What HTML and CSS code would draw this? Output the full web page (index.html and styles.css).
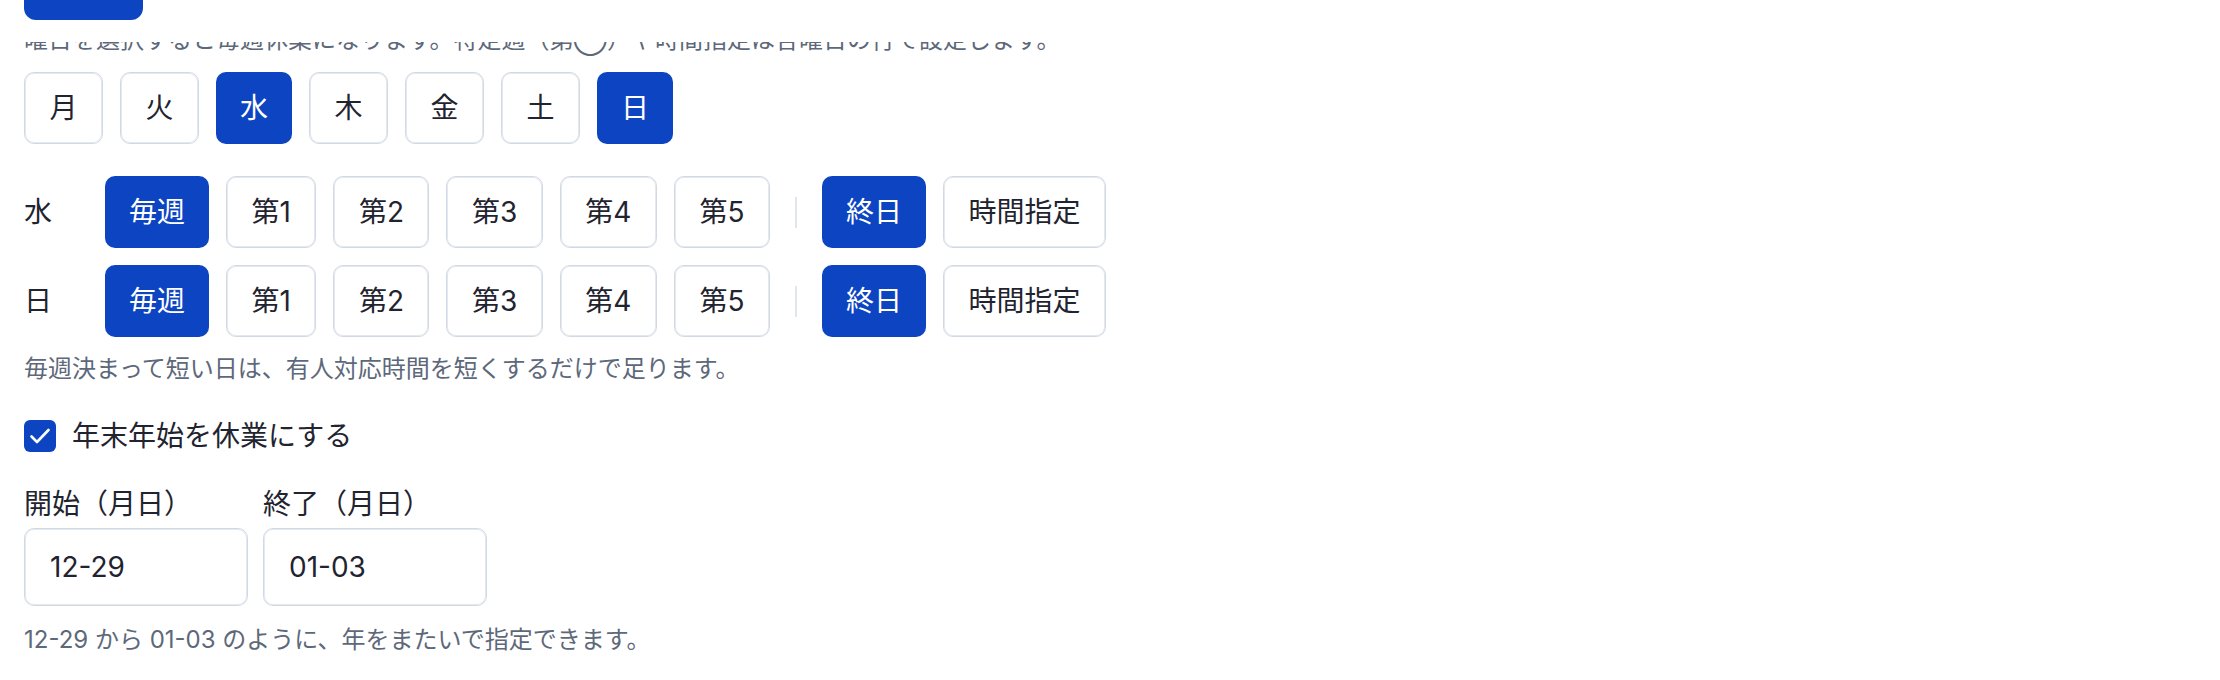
FILE: index.html
```html
<!DOCTYPE html>
<html lang="ja">
<head>
<meta charset="utf-8">
<title>休業設定</title>
<link rel="stylesheet" href="styles.css">
</head>
<body>
<header class="topbar">
  <button class="btn-primary" type="button" aria-label="保存"></button>
</header>
<main class="form">
  <p class="hint hint-first">曜日を選択すると毎週休業になります。特定週（第◯）や時間指定は各曜日の行で設定します。</p>

  <div class="days">
    <button class="chip day" type="button">月</button>
    <button class="chip day" type="button">火</button>
    <button class="chip day on" type="button">水</button>
    <button class="chip day" type="button">木</button>
    <button class="chip day" type="button">金</button>
    <button class="chip day" type="button">土</button>
    <button class="chip day on" type="button">日</button>
  </div>

  <div class="weeks">
    <div class="week-row">
      <span class="week-label">水</span>
      <button class="chip on" type="button">毎週</button>
      <button class="chip" type="button">第1</button>
      <button class="chip" type="button">第2</button>
      <button class="chip" type="button">第3</button>
      <button class="chip" type="button">第4</button>
      <button class="chip" type="button">第5</button>
      <span class="sep"></span>
      <button class="chip on" type="button">終日</button>
      <button class="chip" type="button">時間指定</button>
    </div>
    <div class="week-row">
      <span class="week-label">日</span>
      <button class="chip on" type="button">毎週</button>
      <button class="chip" type="button">第1</button>
      <button class="chip" type="button">第2</button>
      <button class="chip" type="button">第3</button>
      <button class="chip" type="button">第4</button>
      <button class="chip" type="button">第5</button>
      <span class="sep"></span>
      <button class="chip on" type="button">終日</button>
      <button class="chip" type="button">時間指定</button>
    </div>
  </div>

  <p class="hint hint-weeks">毎週決まって短い日は、有人対応時間を短くするだけで足ります。</p>

  <label class="check-row">
    <span class="checkbox">
      <svg viewBox="0 0 32 32" width="32" height="32" aria-hidden="true"><path d="M7.5 16.5 L13 22 L24.5 10" fill="none" stroke="#ffffff" stroke-width="2.6" stroke-linecap="round" stroke-linejoin="round"/></svg>
    </span>
    <span class="check-text">年末年始を休業にする</span>
  </label>

  <div class="dates">
    <div class="field">
      <span class="field-label">開始（月日）</span>
      <div class="input">12-29</div>
    </div>
    <div class="field">
      <span class="field-label">終了（月日）</span>
      <div class="input">01-03</div>
    </div>
  </div>

  <p class="hint hint-dates">12-29 から 01-03 のように、年をまたいで指定できます。</p>
</main>
</body>
</html>
```

FILE: styles.css
```css
* {
  box-sizing: border-box;
}

html, body {
  margin: 0;
  padding: 0;
  background: #ffffff;
}

body {
  position: relative;
  font-family: Inter, "Noto Sans CJK JP", sans-serif;
  color: #1f2430;
  font-size: 28px;
  line-height: 1.5;
}

.topbar {
  position: absolute;
  top: 0;
  left: 0;
  right: 0;
  height: 42px;
  padding: 0 24px 22px;
  display: flex;
  align-items: flex-end;
  background: #ffffff;
  overflow: hidden;
  z-index: 2;
}

.btn-primary {
  flex: none;
  width: 119px;
  height: 72px;
  border: none;
  border-radius: 12px;
  background: #0c44c2;
}

.form {
  padding: 22px 24px 0;
}

.hint {
  margin: 0;
  font-size: 24px;
  line-height: 36px;
  color: #5d687a;
}

.days {
  display: flex;
  gap: 17px;
  margin-top: 14px;
}

.chip {
  flex: none;
  height: 72px;
  padding: 0 24.5px;
  display: inline-flex;
  align-items: center;
  justify-content: center;
  border: 1px solid #d3d9e4;
  box-shadow: inset 0 0 0 1px #e4e8ef;
  border-radius: 10px;
  background: #ffffff;
  color: #1f2430;
  font: inherit;
  font-size: 28px;
  line-height: 42px;
  white-space: nowrap;
}

.chip.on {
  border: none;
  box-shadow: none;
  padding: 0 24px;
  background: #0c44c2;
  color: #ffffff;
}

.weeks {
  display: flex;
  flex-direction: column;
  gap: 17px;
  margin-top: 32px;
}

.week-row {
  display: flex;
  align-items: center;
  gap: 17px;
}

.week-label {
  width: 64px;
  flex: none;
}

.sep {
  flex: none;
  width: 2px;
  height: 31px;
  margin: 0 8px;
  background: #e1e5ec;
}

.hint-weeks {
  margin-top: 14px;
}

.check-row {
  display: flex;
  align-items: center;
  gap: 16px;
  margin-top: 28px;
  height: 42px;
}

.checkbox {
  width: 32px;
  height: 32px;
  border-radius: 6px;
  background: #0c44c2;
  display: flex;
}

.dates {
  display: flex;
  gap: 15px;
  margin-top: 26px;
}

.field {
  width: 224px;
  display: flex;
  flex-direction: column;
}

.field-label {
  line-height: 42px;
  margin-bottom: 3px;
}

.input {
  height: 78px;
  padding: 0 25px;
  display: flex;
  align-items: center;
  border: 1px solid #d3d9e4;
  box-shadow: inset 0 0 0 1px #e4e8ef;
  border-radius: 10px;
  background: #ffffff;
  color: #1f2430;
}

.hint-dates {
  margin-top: 16px;
}
```
